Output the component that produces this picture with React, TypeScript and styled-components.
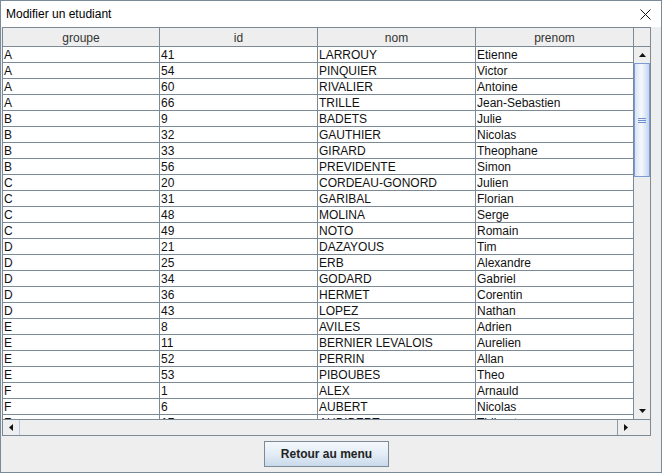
import styled, { createGlobalStyle } from "styled-components";

const GlobalStyle = createGlobalStyle`
  html, body {
    margin: 0;
    padding: 0;
    overflow: hidden;
    background: #ffffff;
  }
  * {
    box-sizing: border-box;
  }
`;

const GRID = "#7a8a99";

interface Student {
    groupe: string;
    id: number;
    nom: string;
    prenom: string;
}

const students: Student[] = [
    { groupe: "A", id: 41, nom: "LARROUY", prenom: "Etienne" },
    { groupe: "A", id: 54, nom: "PINQUIER", prenom: "Victor" },
    { groupe: "A", id: 60, nom: "RIVALIER", prenom: "Antoine" },
    { groupe: "A", id: 66, nom: "TRILLE", prenom: "Jean-Sebastien" },
    { groupe: "B", id: 9, nom: "BADETS", prenom: "Julie" },
    { groupe: "B", id: 32, nom: "GAUTHIER", prenom: "Nicolas" },
    { groupe: "B", id: 33, nom: "GIRARD", prenom: "Theophane" },
    { groupe: "B", id: 56, nom: "PREVIDENTE", prenom: "Simon" },
    { groupe: "C", id: 20, nom: "CORDEAU-GONORD", prenom: "Julien" },
    { groupe: "C", id: 31, nom: "GARIBAL", prenom: "Florian" },
    { groupe: "C", id: 48, nom: "MOLINA", prenom: "Serge" },
    { groupe: "C", id: 49, nom: "NOTO", prenom: "Romain" },
    { groupe: "D", id: 21, nom: "DAZAYOUS", prenom: "Tim" },
    { groupe: "D", id: 25, nom: "ERB", prenom: "Alexandre" },
    { groupe: "D", id: 34, nom: "GODARD", prenom: "Gabriel" },
    { groupe: "D", id: 36, nom: "HERMET", prenom: "Corentin" },
    { groupe: "D", id: 43, nom: "LOPEZ", prenom: "Nathan" },
    { groupe: "E", id: 8, nom: "AVILES", prenom: "Adrien" },
    { groupe: "E", id: 11, nom: "BERNIER LEVALOIS", prenom: "Aurelien" },
    { groupe: "E", id: 52, nom: "PERRIN", prenom: "Allan" },
    { groupe: "E", id: 53, nom: "PIBOUBES", prenom: "Theo" },
    { groupe: "F", id: 1, nom: "ALEX", prenom: "Arnauld" },
    { groupe: "F", id: 6, nom: "AUBERT", prenom: "Nicolas" },
    { groupe: "F", id: 17, nom: "AUDIBERT", prenom: "Thibaut" },
];

const columns = [
    { key: "groupe", label: "groupe", width: 157 },
    { key: "id", label: "id", width: 158 },
    { key: "nom", label: "nom", width: 158 },
    { key: "prenom", label: "prenom", width: 158 },
] as const;

const Window = styled.div`
  width: 662px;
  height: 473px;
  border: 1px solid ${GRID};
  background: #eeeeee;
  display: flex;
  flex-direction: column;
  font-family: "Liberation Sans", Arial, sans-serif;
  font-size: 12px;
  color: #000;
`;

const TitleBar = styled.div`
  height: 26px;
  background: #ffffff;
  display: flex;
  align-items: center;
  justify-content: space-between;
  padding: 0 10px 0 5px;
`;

const Title = styled.span`
  font-size: 12px;
  color: #000;
  padding-bottom: 1px;
`;

const CloseButton = styled.div`
  width: 12px;
  height: 12px;
  display: flex;
  align-items: center;
  justify-content: center;
`;

const ScrollPane = styled.div`
  width: 649px;
  margin-left: 1px;
  border: 1px solid ${GRID};
  display: grid;
  grid-template-columns: 631px 16px;
  grid-template-rows: 19px 372px 16px;
  background: #ffffff;
`;

const HeaderRow = styled.div`
  display: flex;
  background: #eeeeee;
`;

const HeaderCell = styled.div<{ $w: number }>`
  width: ${({ $w }) => $w}px;
  height: 19px;
  border-right: 1px solid ${GRID};
  border-bottom: 1px solid ${GRID};
  display: flex;
  align-items: center;
  justify-content: center;
  color: #333;
  padding-top: 1px;
`;

const HeaderCorner = styled.div`
  background: #eeeeee;
  border-bottom: 1px solid ${GRID};
`;

const Viewport = styled.div`
  overflow: hidden;
  background: #ffffff;
`;

const Row = styled.div`
  display: flex;
  height: 16px;
`;

const Cell = styled.div<{ $w: number }>`
  width: ${({ $w }) => $w}px;
  height: 16px;
  border-right: 1px solid ${GRID};
  border-bottom: 1px solid ${GRID};
  padding-left: 1px;
  line-height: 17px;
  white-space: nowrap;
  overflow: hidden;
  color: #111;
`;

const VScroll = styled.div`
  display: flex;
  flex-direction: column;
  background: #eeeeee;
`;

const ArrowButton = styled.div<{ $h?: boolean }>`
  width: 16px;
  height: ${({ $h }) => ($h ? "15px" : "16px")};
  display: flex;
  align-items: center;
  justify-content: center;
  background: #eeeeee;
  flex-shrink: 0;
`;

const VTrack = styled.div`
  flex: 1;
  display: flex;
  flex-direction: column;
`;

const VThumb = styled.div`
  height: 114px;
  border: 1px solid #7d9bd3;
  background: linear-gradient(to right, #d7e3f4, #f6f9fd 45%, #c4d5ee);
  display: flex;
  flex-direction: column;
  align-items: center;
  justify-content: center;
  gap: 1px;
`;

const GripLine = styled.div`
  width: 8px;
  height: 1px;
  background: #6d8fcf;
`;

const HScroll = styled.div`
  display: flex;
  background: #eeeeee;
  border-top: 1px solid ${GRID};
`;

const HTrack = styled.div`
  flex: 1;
  border-left: 1px solid #b4c7e4;
  border-right: 1px solid #8d9aa7;
`;

const Corner = styled.div`
  background: #eeeeee;
  border-top: 1px solid ${GRID};
`;

const BottomPanel = styled.div`
  width: 649px;
  margin-left: 1px;
  flex: 1;
  display: flex;
  align-items: center;
  justify-content: center;
`;

const MenuButton = styled.button`
  width: 125px;
  height: 26px;
  border: 1px solid ${GRID};
  background: linear-gradient(to bottom, #f4f8fc, #e3ecf6 50%, #c9d9ea);
  font-family: "Liberation Sans", Arial, sans-serif;
  font-size: 12px;
  font-weight: bold;
  color: #222;
  padding: 0;
  cursor: pointer;
`;

const Triangle = ({ dir }: { dir: "up" | "down" | "left" | "right" }) => {
    const points = {
        up: "0,4 7,4 3.5,0",
        down: "0,0 7,0 3.5,4",
        left: "4,0 4,7 0,3.5",
        right: "0,0 0,7 4,3.5",
    }[dir];
    const vertical = dir === "up" || dir === "down";
    return (
        <svg width={vertical ? 7 : 4} height={vertical ? 4 : 7} viewBox={vertical ? "0 0 7 4" : "0 0 4 7"}>
            <polygon points={points} fill="#111" />
        </svg>
    );
};

export default function App() {
    return (
        <>
            <GlobalStyle />
            <Window>
                <TitleBar>
                    <Title>Modifier un etudiant</Title>
                    <CloseButton>
                        <svg width="11" height="11" viewBox="0 0 11 11">
                            <path d="M0.5 0.5 L10.5 10.5 M10.5 0.5 L0.5 10.5" stroke="#111" strokeWidth="1" />
                        </svg>
                    </CloseButton>
                </TitleBar>

                <ScrollPane>
                    <HeaderRow>
                        {columns.map((c) => (
                            <HeaderCell key={c.key} $w={c.width}>
                                {c.label}
                            </HeaderCell>
                        ))}
                    </HeaderRow>
                    <HeaderCorner />

                    <Viewport>
                        {students.map((s) => (
                            <Row key={s.id}>
                                {columns.map((c) => (
                                    <Cell key={c.key} $w={c.width}>
                                        {s[c.key]}
                                    </Cell>
                                ))}
                            </Row>
                        ))}
                    </Viewport>
                    <VScroll>
                        <ArrowButton>
                            <Triangle dir="up" />
                        </ArrowButton>
                        <VTrack>
                            <VThumb>
                                <GripLine />
                                <GripLine />
                                <GripLine />
                            </VThumb>
                        </VTrack>
                        <ArrowButton>
                            <Triangle dir="down" />
                        </ArrowButton>
                    </VScroll>

                    <HScroll>
                        <ArrowButton $h>
                            <Triangle dir="left" />
                        </ArrowButton>
                        <HTrack />
                        <ArrowButton $h>
                            <Triangle dir="right" />
                        </ArrowButton>
                    </HScroll>
                    <Corner />
                </ScrollPane>

                <BottomPanel>
                    <MenuButton>Retour au menu</MenuButton>
                </BottomPanel>
            </Window>
        </>
    );
}
